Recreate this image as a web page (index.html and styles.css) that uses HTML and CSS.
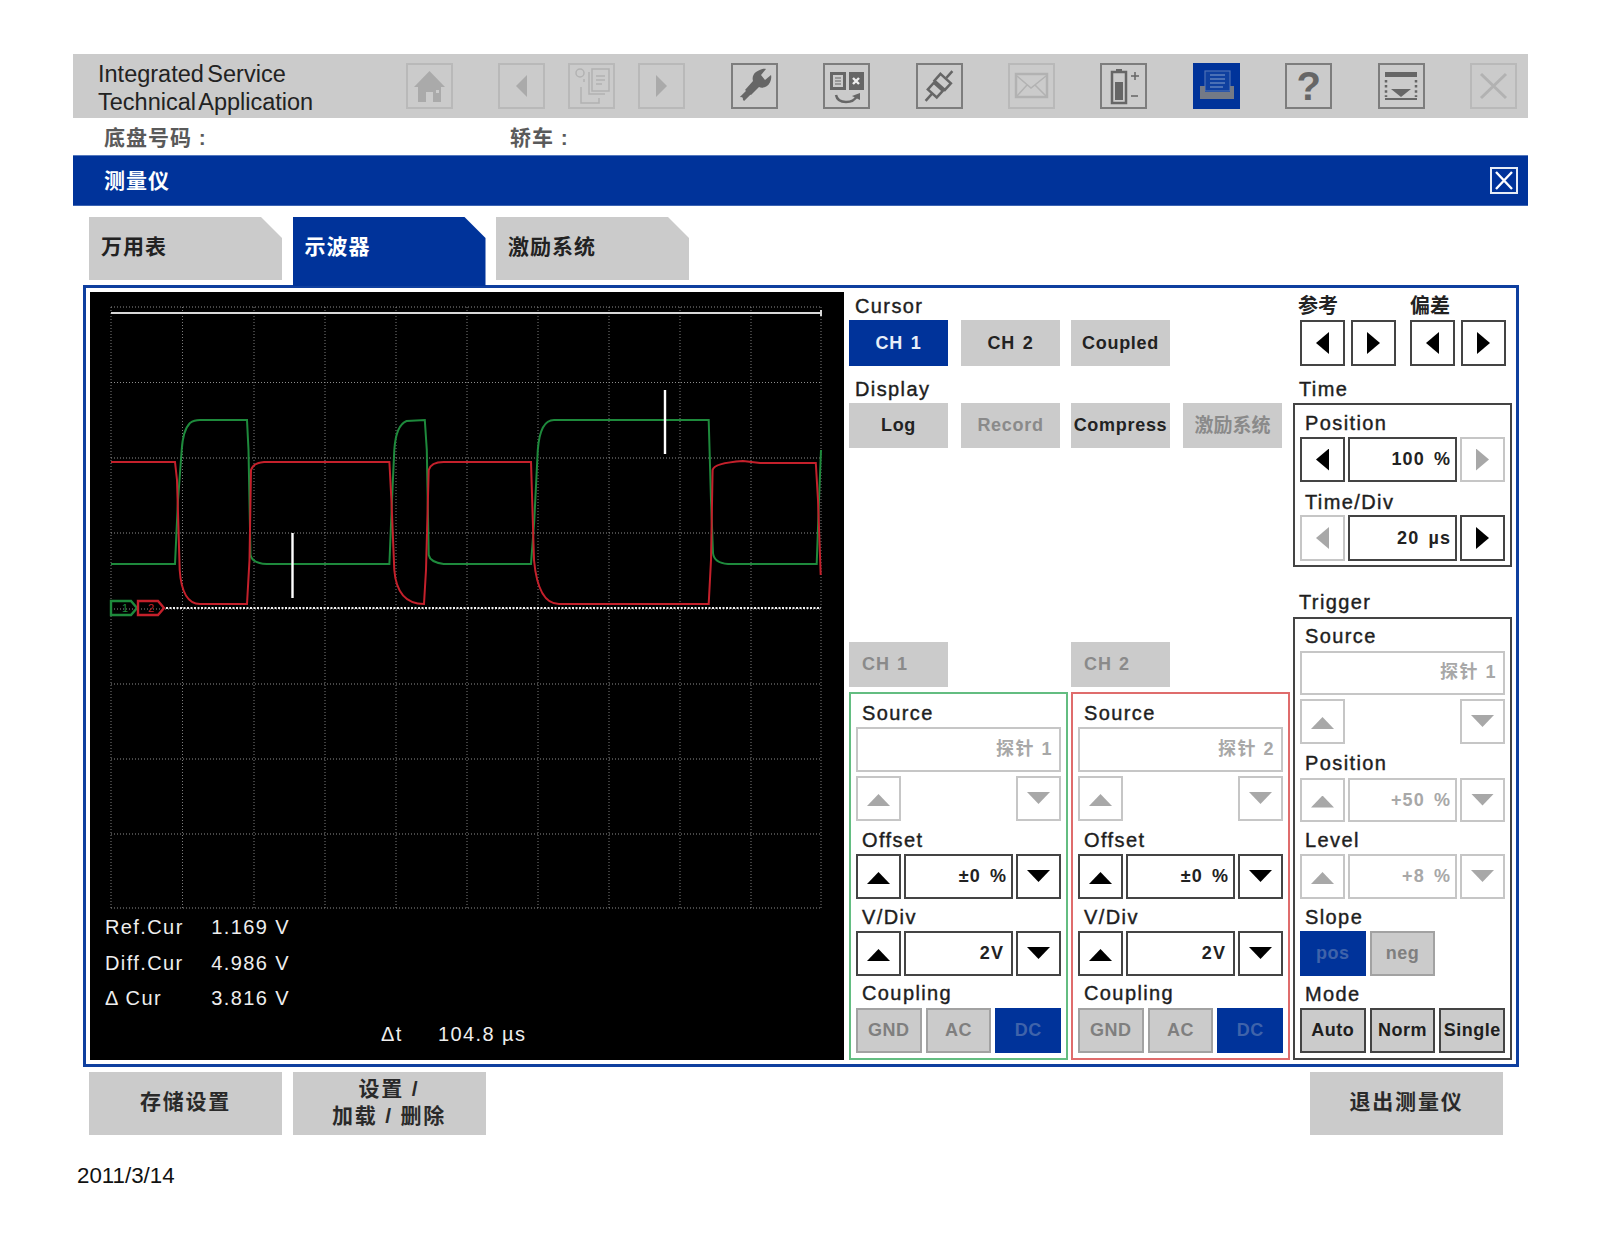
FILE: index.html
```html
<!DOCTYPE html>
<html lang="zh-CN">
<head>
<meta charset="utf-8">
<title>Integrated Service Technical Application</title>
<link rel="stylesheet" href="styles.css">
</head>
<body>
<div class="app">
  <header class="topbar">
    <div class="brand">Integrated Service<br>Technical Application</div>
    <div class="tool off"><svg viewBox="2 2 43 42"><path class="fill" d="M23.5 8 39 24h-4v15h-8V29h-7v10h-8V24H8z"/><rect class="hole" x="30" y="27" width="3" height="3"/></svg></div>
    <div class="tool off wide"><svg viewBox="2 2 43 42"><path class="fill" d="M18 23 29 12v22z"/></svg></div>
    <div class="tool off near"><svg viewBox="2 2 43 42"><circle class="line" cx="12" cy="10" r="4"/><path class="line" d="M16 16v3M13 24v16h18v-5"/><rect class="line" x="24" y="6" width="17" height="22"/><path class="line" d="M21 9v22h16M28 13h9M28 17h9M28 21h6"/></svg></div>
    <div class="tool off near"><svg viewBox="2 2 43 42"><path class="fill" d="M18 12 29 23 18 34z"/></svg></div>
    <div class="tool wide"><svg viewBox="2 2 43 42"><path class="stroke-6" d="M11 36 27 20"/><path class="fill" d="M25 9c4-3 8-4 10-3l-5 6 4 5 6-5c1 4-1 9-4 11-3 2-6 2-8 1l-8 8-6-5 8-9c-1-3 0-7 3-9z"/><circle class="hole" cx="10" cy="36" r="2"/></svg></div>
    <div class="tool wide"><svg viewBox="2 2 43 42"><rect class="fill" x="7" y="9" width="16" height="18"/><rect class="hole" x="10" y="12" width="10" height="12"/><path class="thin" d="M12 15h6M12 18h6M12 21h6"/><rect class="fill" x="26" y="9" width="15" height="18"/><path class="white" d="m30 15 6 6m0-6-6 6"/><path class="line2" d="M13 32c1 5 4 7 10 7s9-2 11-6"/><path class="fill" d="m29 33 8-3 0 7z"/></svg></div>
    <div class="tool wide"><svg viewBox="2 2 43 42"><g transform="rotate(42 23 23)"><path class="line2" d="M23 3v9M23 33v10"/><path class="line2" d="M16 13h14v9H16zM17 24h12v9H17zM20 22v2M26 22v2"/></g></svg></div>
    <div class="tool off wide"><svg viewBox="2 2 43 42"><rect class="line2" x="8" y="11" width="31" height="23"/><path class="line" d="m9 13 14 12 15-12M9 33l10-11M38 33 27 22"/></svg></div>
    <div class="tool wide"><svg viewBox="2 2 43 42"><rect class="line2" x="12" y="9" width="14" height="31"/><rect class="fill" x="16" y="6" width="6" height="3"/><rect class="fill" x="15" y="19" width="8" height="18"/><path class="line" d="M31 13h8M35 9v8M31 33h7"/></svg></div>
    <div class="tool on wide"><svg viewBox="2 2 43 42"><rect class="paper" x="12" y="8" width="25" height="20"/><path class="paperline" d="M17 12h15M17 16h15M17 20h15M17 24h13"/><path class="tray" d="M7 23h5v6h25v-6h4v13H7z"/></svg></div>
    <div class="tool wide"><span class="qmark">?</span></div>
    <div class="tool wide"><svg viewBox="2 2 43 42"><rect class="fill" x="7" y="9" width="32" height="5"/><path class="dots" d="M8 17v17M38 17v17"/><path class="fill" d="M13 26h20l-10 8z"/><rect class="fill" x="7" y="35" width="32" height="2"/></svg></div>
    <div class="tool off wide"><svg viewBox="2 2 43 42"><path class="line3" d="m11 11 25 24m0-24L11 35"/></svg></div>
  </header>

  <div class="info"><span class="info-a">底盘号码 :</span><span>轿车 :</span></div>

  <div class="titlebar">
    <span class="title">测量仪</span>
    <div class="close"><svg viewBox="0 0 24 23"><path d="m4 3 16 17m0-17L4 20"/></svg></div>
  </div>

  <nav class="tabs">
    <div class="tab">万用表</div>
    <div class="tab active">示波器</div>
    <div class="tab">激励系统</div>
  </nav>

  <main class="panel">
    <section class="scope">
      <svg class="screen" viewBox="0 0 754 618" width="754" height="618">
        <g transform="translate(-90 -292)">
          <path class="grid" d="M111 307V908M182.5 307V908M254 307V908M325 307V908M396 307V908M467 307V908M538 307V908M609 307V908M680 307V908M751 307V908M821 307V908"/>
          <path class="grid hgrid" d="M111 307H821M111 382.5H821M111 458H821M111 533H821M111 609H821M111 684H821M111 759H821M111 834H821M111 908H821"/>
          <path class="topline" d="M111 313H821M821 310V316"/>
          <path class="baseline" d="M166 608H821"/>
          <path class="trace green" d="M111 564H175L178 500 181.7 450Q183 430 190 423 194 420 200 420H247L248.500 450 250.500 555Q252 563 266.600 564H389.400L392 500 394.300 450Q396 425 406.600 421L424.800 420 426.800 450 428.700 555Q430 562 443.500 564H531L534.300 520 537.800 450Q540 420 554 420H708.700L711 500 713 553Q714 563 728 564H816.700L819 500 821 450"/>
          <path class="trace red" d="M111 462H175L177 480 179.700 570Q182 604 200 604H247L249.500 560 251 470Q253 463 264 462H389.400L391.400 500 394.300 570Q397 604 424 604L426 570 428.700 470Q431 462 443.500 462H531L534 560Q538 604 559 604H708.700L711 560 712.600 470Q714 463 743 461L760 463H815.800L818 500 820.700 575"/>
          <path class="cursor" d="M292.500 533V598M665 390V454"/>
          <path class="mark green" d="M111 601H131L137 608 131 615H111Z"/>
          <path class="mark red" d="M138 601H158L164 608 158 615H138Z"/>
          <text class="marktext mg" x="122" y="612">1</text>
          <text class="marktext mr" x="148" y="612">2</text>
        </g>
      </svg>
      <div class="read"><span>Ref.Cur</span><b>1.169 V</b></div>
      <div class="read"><span>Diff.Cur</span><b>4.986 V</b></div>
      <div class="read"><span>Δ Cur</span><b>3.816 V</b></div>
      <div class="read read-dt"><span>Δt</span><b>104.8 µs</b></div>
    </section>

    <section class="mid">
      <div class="lbl first">Cursor</div>
      <div class="btnrow">
        <div class="btn blue">CH 1</div><div class="btn">CH 2</div><div class="btn">Coupled</div>
      </div>
      <div class="lbl second">Display</div>
      <div class="btnrow">
        <div class="btn">Log</div><div class="btn dim">Record</div><div class="btn">Compress</div><div class="btn dim cjk">激励系统</div>
      </div>

      <div class="channels">
        <div class="chan">
          <div class="chtab">CH 1</div>
          <div class="chbox g">
            <div class="lbl top">Source</div>
            <div class="field dim">探针 1</div>
            <div class="ends"><div class="arr dis"><i class="up"></i></div><div class="arr dis"><i class="dn"></i></div></div>
            <div class="lbl">Offset</div>
            <div class="spin"><div class="arr"><i class="up"></i></div><div class="val">±0 %</div><div class="arr"><i class="dn"></i></div></div>
            <div class="lbl l7">V/Div</div>
            <div class="spin"><div class="arr"><i class="up"></i></div><div class="val v2">2V</div><div class="arr"><i class="dn"></i></div></div>
            <div class="lbl l6">Coupling</div>
            <div class="trio"><div class="mini">GND</div><div class="mini">AC</div><div class="mini sel">DC</div></div>
          </div>
        </div>
        <div class="chan">
          <div class="chtab">CH 2</div>
          <div class="chbox r">
            <div class="lbl top">Source</div>
            <div class="field dim">探针 2</div>
            <div class="ends"><div class="arr dis"><i class="up"></i></div><div class="arr dis"><i class="dn"></i></div></div>
            <div class="lbl">Offset</div>
            <div class="spin"><div class="arr"><i class="up"></i></div><div class="val">±0 %</div><div class="arr"><i class="dn"></i></div></div>
            <div class="lbl l7">V/Div</div>
            <div class="spin"><div class="arr"><i class="up"></i></div><div class="val v2">2V</div><div class="arr"><i class="dn"></i></div></div>
            <div class="lbl l6">Coupling</div>
            <div class="trio"><div class="mini">GND</div><div class="mini">AC</div><div class="mini sel">DC</div></div>
          </div>
        </div>
      </div>
    </section>

    <section class="side">
      <div class="refhead"><span class="ref-a">参考</span><span>偏差</span></div>
      <div class="refrow">
        <div class="arr"><i class="lf"></i></div><div class="arr"><i class="rt"></i></div>
        <div class="arr pair"><i class="lf"></i></div><div class="arr"><i class="rt"></i></div>
      </div>
      <div class="lbl second slbl">Time</div>
      <div class="box timebox">
        <div class="lbl t1">Position</div>
        <div class="spin"><div class="arr"><i class="lf"></i></div><div class="val">100 %</div><div class="arr dis"><i class="rt"></i></div></div>
        <div class="lbl t2">Time/Div</div>
        <div class="spin tall"><div class="arr dis"><i class="lf"></i></div><div class="val">20 µs</div><div class="arr"><i class="rt"></i></div></div>
      </div>
      <div class="lbl slbl trig">Trigger</div>
      <div class="box trigbox">
        <div class="lbl s1">Source</div>
        <div class="field dim short">探针 1</div>
        <div class="ends"><div class="arr dis"><i class="up"></i></div><div class="arr dis"><i class="dn"></i></div></div>
        <div class="lbl p1">Position</div>
        <div class="spin short"><div class="arr dis"><i class="up"></i></div><div class="val dim">+50 %</div><div class="arr dis"><i class="dn"></i></div></div>
        <div class="lbl l7">Level</div>
        <div class="spin"><div class="arr dis"><i class="up"></i></div><div class="val dim">+8 %</div><div class="arr dis"><i class="dn"></i></div></div>
        <div class="lbl l7">Slope</div>
        <div class="trio"><div class="mini sel">pos</div><div class="mini">neg</div></div>
        <div class="lbl l7">Mode</div>
        <div class="trio"><div class="mini live">Auto</div><div class="mini live">Norm</div><div class="mini live">Single</div></div>
      </div>
    </section>
  </main>

  <footer class="actions">
    <div class="act">存储设置</div>
    <div class="act">设置 /<br>加载 / 删除</div>
    <div class="act exit">退出测量仪</div>
  </footer>
  <div class="date">2011/3/14</div>
</div>
</body>
</html>
```
FILE: styles.css
```css
* { box-sizing: border-box; }
html, body { margin: 0; padding: 0; background: #fff; }
body {
  font-family: "Liberation Sans", "Noto Sans CJK SC", sans-serif;
  color: #222;
}
.app { width: 1455px; margin-left: 73px; padding-top: 54px; }

/* top toolbar */
.topbar { height: 64px; background: #cbcbcb; display: flex; align-items: center; }
.brand { width: 333px; padding: 3px 0 0 25px; font-size: 23.5px; line-height: 28px; color: #222; word-spacing: -3px; }
.tool { width: 47px; height: 46px; border: 2px solid #7d7d7d; flex: none; display: flex; align-items: center; justify-content: center; }
.tool svg { width: 43px; height: 42px; display: block; }
.tool.wide { margin-left: 45.4px; }
.tool.near { margin-left: 23px; }
.tool.off { border-color: #b9b9b9; }
.tool.on { background: #00339a; border-color: #00339a; }
.fill { fill: #666; }
.hole { fill: #cbcbcb; }
.line { fill: none; stroke: #666; stroke-width: 1.5; }
.line2 { fill: none; stroke: #666; stroke-width: 2.5; }
.line3 { fill: none; stroke: #666; stroke-width: 3; }
.thin { fill: none; stroke: #666; stroke-width: 1.2; }
.white { fill: none; stroke: #eee; stroke-width: 2.4; }
.stroke-6 { fill: none; stroke: #666; stroke-width: 6; }
.dots { fill: none; stroke: #666; stroke-width: 2.5; stroke-dasharray: 2.5 2.6; }
.off .fill { fill: #aaa; }
.off .line, .off .line2, .off .line3 { stroke: #b2b2b2; }
.paper { fill: #0f409f; stroke: #4c70b5; stroke-width: 1.2; }
.paperline { fill: none; stroke: #5f80bd; stroke-width: 1.3; }
.tray { fill: #747a86; }
.qmark { font-size: 40px; line-height: 42px; font-weight: 700; color: #666; }

/* info row */
.info { height: 37px; padding: 0 0 1px 31px; display: flex; align-items: center; font-size: 21px; font-weight: 700; letter-spacing: 1px; color: #5a5a5a; }
.info-a { width: 406px; }

/* title */
.titlebar { height: 51px; background: #00339a; border-top: 1px solid #5478bd; border-bottom: 1px solid #3b63b2; padding: 0 10px 0 31px; color: #fff; font-size: 21px; font-weight: 700; letter-spacing: 1px; display: flex; align-items: center; justify-content: space-between; }
.title { padding-bottom: 3px; }
.close { width: 28px; height: 27px; border: 2px solid #e6ecf6; }
.close svg { width: 24px; height: 23px; display: block; }
.close path { fill: none; stroke: #fff; stroke-width: 2.4; }

/* tabs */
.tabs { margin-top: 11px; padding-left: 16px; height: 68px; display: flex; gap: 10.5px; position: relative; z-index: 1; }
.tab { width: 193px; height: 63px; background: #cbcbcb; clip-path: polygon(0 0, calc(100% - 21px) 0, 100% 21px, 100% 100%, 0 100%); font-size: 21px; font-weight: 700; letter-spacing: 1px; color: #222; line-height: 59px; padding-left: 12px; }
.tab.active { height: 69px; background: #00339a; color: #fff; }

/* panel */
.panel { margin-left: 10px; width: 1436px; height: 782px; border: 3px solid #0f3f9f; padding: 4px; display: flex; }
.scope { width: 754px; flex: none; background: #000; color: #eee; font-size: 20px; letter-spacing: 1.4px; }
.screen { display: block; }
.grid { fill: none; stroke: #7c7c7c; stroke-width: 1; stroke-dasharray: 1 2; }
.hgrid { stroke: #8e8e8e; }
.topline { fill: none; stroke: #d8d8d8; stroke-width: 2; }
.baseline { fill: none; stroke: #f0f0f0; stroke-width: 2; stroke-dasharray: 2 1.5; }
.trace { fill: none; stroke-width: 2; }
.trace.green, .mark.green { stroke: #1e8a3c; }
.trace.red, .mark.red { stroke: #c4202b; }
.cursor { fill: none; stroke: #fff; stroke-width: 2.4; }
.mark { fill: none; stroke-width: 2.4; }
.marktext { font-size: 11px; letter-spacing: 0; }
.mg { fill: #1e8a3c; }
.mr { fill: #c4202b; }
.read { height: 35.500px; margin-left: 15px; display: grid; grid-template-columns: 100px 85px; align-items: center; white-space: nowrap; }
.read b { font-weight: 400; text-align: right; }
.read-dt { margin-left: 291px; grid-template-columns: 57px 88px; }
.read-dt b { text-align: left; }

/* shared labels */
.lbl { height: 22px; margin: 8px 0 3px; padding-left: 6px; font-size: 20px; line-height: 22px; letter-spacing: 1.4px; color: #1e1e1e; -webkit-text-stroke: 0.4px #1e1e1e; white-space: nowrap; }
.lbl.l7 { margin-top: 7px; }
.lbl.l6 { margin-top: 6px; margin-bottom: 4px; }
.box .lbl { padding-left: 5px; }

/* middle column */
.mid { width: 441px; margin-left: 5px; flex: none; display: flex; flex-direction: column; }
.lbl.first { margin-top: 3px; }
.lbl.second { margin-top: 12px; }
.btnrow { display: grid; grid-template-columns: 112px 110px 112px 99px; }
.btn { width: 99px; height: 46px; background: #cbcbcb; display: flex; align-items: center; justify-content: center; font-size: 18px; font-weight: 700; letter-spacing: 0.7px; word-spacing: 2px; color: #222; white-space: nowrap; }
.lbl.second + .btnrow .btn { height: 45px; }
.btn.blue { background: #00339a; color: #e8eef8; }
.btn.dim { color: #8a8a8a; }
.btn.cjk { font-size: 19px; letter-spacing: 0; padding-bottom: 4px; }

.channels { margin-top: auto; display: flex; gap: 3px; }
.chan { width: 219px; flex: none; }
.chtab { width: 99px; height: 45px; background: #cbcbcb; color: #8a8a8a; font-size: 18px; font-weight: 700; letter-spacing: 1px; word-spacing: 1px; line-height: 45px; padding-left: 13px; margin-bottom: 5px; }
.chbox { height: 368px; padding: 0 5px; border: 2px solid; }
.chbox.g { border-color: #63bd81; }
.chbox.r { border-color: #df6c6c; }
.lbl.top { margin-top: 8px; }

/* controls */
.field { height: 45px; border: 2px solid #c6c6c6; margin-bottom: 4px; display: flex; align-items: center; justify-content: flex-end; padding: 0 6px 6px 0; font-size: 18px; font-weight: 700; letter-spacing: 1.5px; }
.field.short { height: 44px; }
.dim { color: #a8a8a8; }
.ends { display: flex; justify-content: space-between; }
.arr { width: 45px; height: 45px; flex: none; border: 2px solid #444; background: #fff; display: flex; align-items: center; justify-content: center; }
.arr.dis { border-color: #c6c6c6; }
.arr i { display: block; background: #000; }
.arr.dis i { background: #a8a8a8; }
.up, .dn { width: 23px; height: 12px; }
.up { clip-path: polygon(50% 0, 100% 100%, 0 100%); margin-top: 3px; }
.dn { clip-path: polygon(0 0, 100% 0, 50% 100%); margin-top: -1px; }
.lf, .rt { width: 13px; height: 22px; }
.lf { clip-path: polygon(100% 0, 100% 100%, 0 50%); }
.rt { clip-path: polygon(0 0, 100% 50%, 0 100%); }
.spin { display: grid; grid-template-columns: 45px 1fr 45px; gap: 3px; height: 45px; }
.spin.tall { height: 46px; }
.spin.tall .arr, .spin.tall .val { height: 46px; }
.spin.short, .spin.short .arr, .spin.short .val { height: 44px; }
.val { border: 2px solid #444; display: flex; align-items: center; justify-content: flex-end; padding-right: 4px; font-size: 18px; font-weight: 700; letter-spacing: 1.1px; word-spacing: 3px; color: #222; }
.val.v2 { padding-right: 7px; }
.val.dim { border-color: #c6c6c6; color: #a8a8a8; }
.trio { display: grid; grid-template-columns: repeat(3, 1fr); gap: 4px; height: 45px; }
.mini { background: #cbcbcb; border: 2px solid #a2a2a2; color: #7f7f7f; display: flex; align-items: center; justify-content: center; font-size: 18px; font-weight: 700; letter-spacing: 0.5px; white-space: nowrap; }
.mini.sel { background: #00339a; border-color: #00339a; color: #3f63aa; }
.mini.live { border-color: #444; color: #1e1e1e; }

/* right column */
.side { width: 219px; margin-left: 3px; flex: none; }
.refhead { height: 22px; margin: 3px 0 3px 5px; display: flex; font-size: 20px; font-weight: 700; line-height: 22px; color: #222; }
.ref-a { width: 112px; }
.refrow { padding-left: 7px; display: flex; gap: 6px; height: 46px; }
.refrow .arr { height: 46px; }
.refrow .pair { margin-left: 8px; }
.lbl.slbl { padding-left: 6px; }
.lbl.trig { margin-top: 24px; margin-bottom: 4px; }
.box { border: 2px solid #444; padding: 0 5px; }
.timebox { height: 164px; }
.trigbox { height: 443px; }
.lbl.t1 { margin-top: 7px; }
.lbl.t2 { margin-top: 9px; margin-bottom: 2px; }
.lbl.s1 { margin-top: 6px; margin-bottom: 4px; }
.lbl.p1 { margin-bottom: 4px; }
.trigbox .ends { height: 45px; }

/* footer */
.actions { margin-top: 5px; padding: 0 25px 0 16px; display: flex; gap: 10.5px; }
.act { width: 193px; height: 63px; background: #cbcbcb; display: flex; align-items: center; justify-content: center; text-align: center; padding-bottom: 4px; font-size: 21px; line-height: 27px; font-weight: 700; letter-spacing: 1.8px; color: #2a2a2a; }
.exit { margin-left: auto; }
.date { margin: 28px 0 0 4px; font-size: 22.3px; line-height: 26px; color: #111; }
```
